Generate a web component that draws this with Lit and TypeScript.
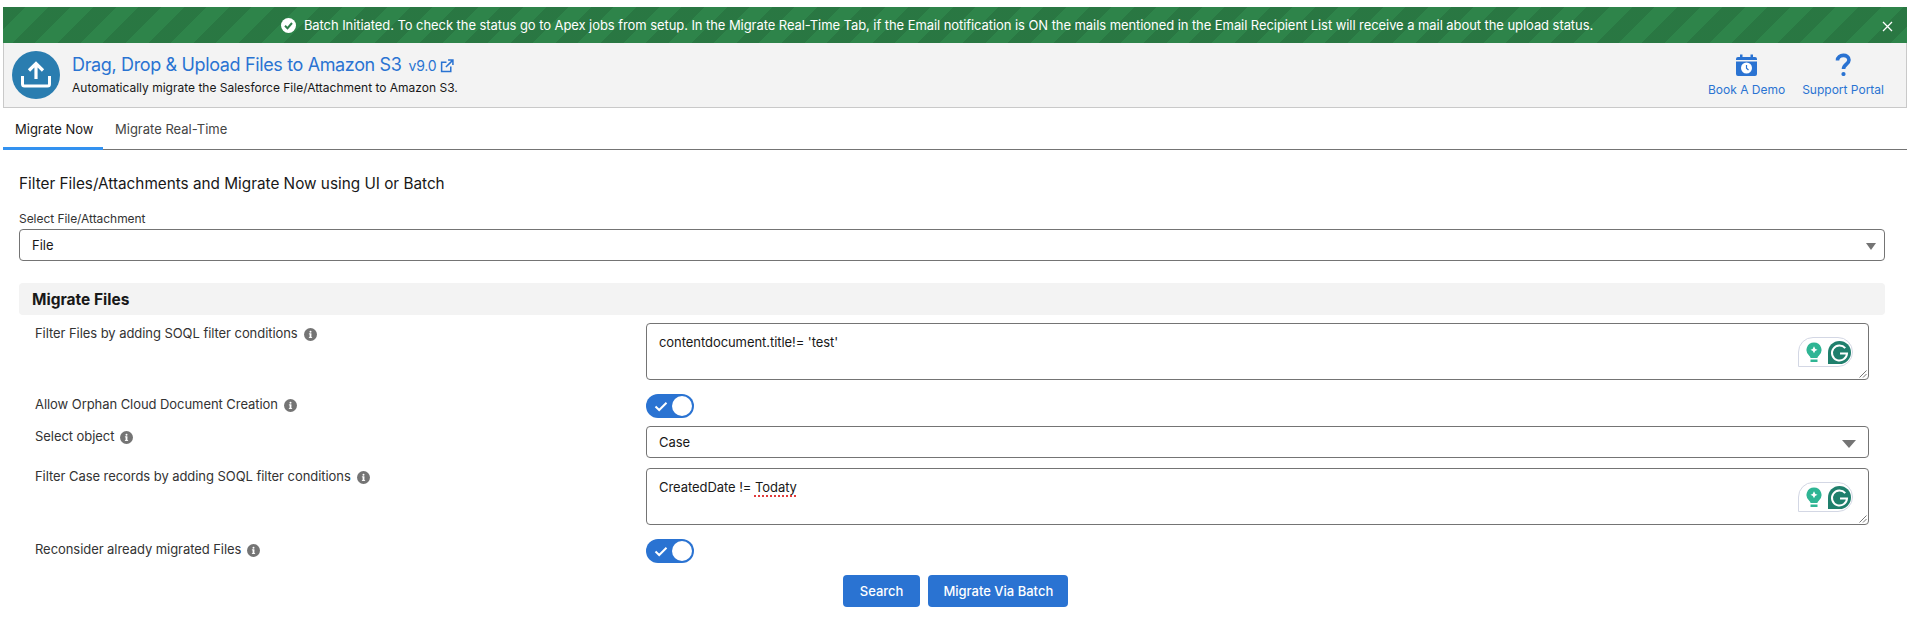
import { LitElement, html, css } from "lit";
import { customElement } from "lit/decorators.js";

const info = html`<svg class="info" viewBox="0 0 13 13"><circle cx="6.5" cy="6.5" r="6.5" fill="#747474"/><rect x="5.6" y="5.6" width="1.8" height="4" fill="#fff"/><rect x="4.9" y="9" width="3.2" height="0.9" fill="#fff"/><rect x="4.9" y="5.4" width="2.4" height="0.9" fill="#fff"/><circle cx="6.5" cy="3.8" r="1" fill="#fff"/></svg>`;

const toggle = html`<div class="toggle"><svg class="tick" viewBox="0 0 14 11"><path d="M1.5 5.5 L5.2 9 L12.5 1.8" fill="none" stroke="#fff" stroke-width="2"/></svg><div class="knob"></div></div>`;

const grammarly = html`<div class="gram">
  <svg width="16" height="21" viewBox="0 0 16 21"><path d="M8 0.5a7.5 7.5 0 0 1 4.6 13.4c-.8.6-1.1 1.2-1.1 2H4.500c0-.8-.3-1.400-1.100-2A7.500 7.500 0 0 1 8 .5z" fill="#2fb594"/><path d="M8 4.200 Q8.500 7 11.500 7.700 Q8.500 8.400 8 11.200 Q7.500 8.400 4.500 7.700 Q7.500 7 8 4.200z" fill="#fff"/><rect x="4.500" y="17.500" width="7" height="2.500" fill="#2fb594"/></svg>
  <svg width="23" height="23" viewBox="0 0 22 22"><path d="M11 0a11 11 0 0 1 0 22H0V11A11 11 0 0 1 11 0z" fill="#1f7f6c"/><path d="M16.500 6.800A7.200 7.200 0 1 0 18.200 12H11.500" fill="none" stroke="#fff" stroke-width="1.900"/></svg>
</div>`;

const grip = html`<svg class="grip" viewBox="0 0 8 8"><path d="M0.500 7.500 L7.500 0.500 M4 7.500 L7.500 4" stroke="#777" stroke-width="1" fill="none"/></svg>`;

@customElement("app-root")
export class AppRoot extends LitElement {
  static styles = css`
    :host { display: block; background: #fff; font-family: Inter, "Liberation Sans", sans-serif; color: #181818; padding-top: 7px; height: 625px; overflow: hidden; }
    * { box-sizing: border-box; }
    .banner { margin-left: 3px; height: 36px; background-color: #2e844a; background-image: repeating-linear-gradient(135deg, rgba(0,0,0,.1) 0, rgba(0,0,0,.1) 16px, transparent 16px, transparent 32px); color: #fff; display: flex; align-items: center; justify-content: center; gap: 8px; font-size: 13px; letter-spacing: -0.07px; padding-right: 36px; position: relative; }
    .banner .ok { width: 15px; height: 15px; flex: none; }
    .close { position: absolute; right: 14px; top: 14px; width: 11px; height: 11px; }
    .header { margin-left: 3px; height: 65px; background: #f3f3f3; border: 1px solid #c9c9c9; border-top: none; display: flex; align-items: center; padding: 0 16px 0 8px; gap: 12px; }
    .logo { width: 48px; height: 48px; flex: none; }
    .titles { flex: 1; }
    .title { display: flex; align-items: baseline; color: #2a73d2; font-size: 18px; letter-spacing: -0.36px; line-height: 24px; }
    .ver { font-size: 14px; margin-left: 7px; letter-spacing: -0.2px; }
    .ext { width: 14px; height: 14px; margin-left: 4px; align-self: center; }
    .sub { font-size: 12px; line-height: 18px; margin-top: 1px; }
    .links { display: flex; gap: 17px; align-items: flex-end; margin-right: 1px; padding-right: 5px; margin-top: 1px; }
    .link { display: flex; flex-direction: column; align-items: center; color: #2a73d2; font-size: 12px; gap: 6px; line-height: 16px; white-space: nowrap; }
    .link svg { height: 23px; width: 23px; }
    .tabs { margin-left: 3px; height: 42px; border-bottom: 1px solid #747474; display: flex; font-size: 13px; white-space: nowrap; }
    .tab { height: 42px; padding: 0 12px; line-height: 42px; width: 100px; }
    .tab.active { border-bottom: 3px solid #3392f0; }
    .tab.other { color: #444; width: auto; }
    .main { padding: 0 22px 0 19px; }
    h1 { margin: 24px 0 0; font-weight: 400; font-size: 15.300px; line-height: 20px; }
    .lab { font-size: 12px; line-height: 16px; margin-top: 17px; color: #333; letter-spacing: -0.05px; }
    .sel { height: 32px; border: 1px solid #747474; border-radius: 4px; display: flex; align-items: center; padding: 0 12px; font-size: 13px; position: relative; background: #fff; }
    .sel.top { margin-top: 2px; }
    .arrow { position: absolute; right: 8px; top: 13px; width: 0; height: 0; border-left: 5.500px solid transparent; border-right: 5.500px solid transparent; border-top: 7px solid #747474; }
    .sel.small .arrow { right: 12px; border-left-width: 7px; border-right-width: 7px; border-top-width: 8px; top: 13px; }
    .sect { margin-top: 22px; height: 32px; background: #f3f3f3; border-radius: 4px; display: flex; align-items: center; padding-left: 13px; font-size: 15.500px; font-weight: 700; }
    .grid { margin-top: 8px; padding-left: 16px; display: grid; grid-template-columns: 611px 1223px; row-gap: 8px; font-size: 13px; letter-spacing: -0.06px; }
    .label { display: flex; gap: 6px; line-height: 20px; align-items: flex-start; color: #333; }
    .info { width: 13px; height: 13px; margin-top: 5px; flex: none; }
    .ta { position: relative; height: 57px; border: 1px solid #747474; border-radius: 4px; padding: 8px 12px; line-height: 20px; }
    .ta.second { margin-top: 2px; }
    .gram { position: absolute; right: 15px; top: 13px; width: 55px; height: 30px; background: #fff; border: 1px solid #d3d7e4; border-radius: 15px 15px 15px 0; display: flex; align-items: center; gap: 6px; padding-left: 7px; }
    .grip { position: absolute; right: 1px; bottom: 1px; width: 8px; height: 8px; }
    .toggle { width: 48px; height: 24px; border-radius: 12px; background: #2a73d2; position: relative; display: flex; align-items: center; }
    .tick { width: 14px; height: 11px; margin-left: 8px; }
    .knob { position: absolute; right: 2px; top: 2px; width: 20px; height: 20px; border-radius: 50%; background: #fff; }
    .gap14 { margin-top: 6px; }
    .squiggle { text-decoration: underline dotted #e23b3b 2px; text-underline-offset: 3px; }
    .btns { margin-top: 12px; display: flex; justify-content: center; gap: 8px; padding-left: 7px; }
    .btn { height: 32px; background: #2a73d2; color: #fff; border-radius: 4px; font-size: 13px; font-weight: 500; display: flex; align-items: center; padding: 0 17px; }
    .btn.wide { padding: 0 15px; }
  `;

  render() {
    return html`
      <div class="banner">
        <svg class="ok" viewBox="0 0 15 15"><circle cx="7.500" cy="7.500" r="7.500" fill="#fff"/><path d="M4 7.800 L6.500 10.200 L11 5" fill="none" stroke="#2e7d4a" stroke-width="2"/></svg>
        <span>Batch Initiated. To check the status go to Apex jobs from setup. In the Migrate Real-Time Tab, if the Email notification is ON the mails mentioned in the Email Recipient List will receive a mail about the upload status.</span>
        <svg class="close" viewBox="0 0 11 11"><path d="M1 1 L10 10 M10 1 L1 10" stroke="#fff" stroke-width="1.300"/></svg>
      </div>
      <div class="header">
        <svg class="logo" viewBox="0 0 48 48"><ellipse cx="24" cy="24" rx="24" ry="24" fill="#2a7db0"/><path d="M24 28 V13 M17 19.500 L24 12.500 L31 19.500" fill="none" stroke="#fff" stroke-width="3.200"/><path d="M10.500 25 V33 Q10.500 35 12.500 35 H35.500 Q37.500 35 37.500 33 V25" fill="none" stroke="#fff" stroke-width="3"/></svg>
        <div class="titles">
          <div class="title"><span>Drag, Drop &amp; Upload Files to Amazon S3</span><span class="ver">v9.0</span>
            <svg class="ext" viewBox="0 0 13 13"><path d="M6 3 H1.500 V11.500 H10 V7 M5.500 7.500 L11.500 1.500 M7.500 1 H12 V5.500" fill="none" stroke="#2a73d2" stroke-width="1.400"/></svg></div>
          <div class="sub">Automatically migrate the Salesforce File/Attachment to Amazon S3.</div>
        </div>
        <div class="links">
          <div class="link"><svg viewBox="0 0 23 23"><path d="M1 6 a2 2 0 0 1 2-2 H5 V1.500 H7.500 V4 H15.500 V1.500 H18 V4 H20 a2 2 0 0 1 2 2 V7 H1z M1 8.500 H22 V21 a2 2 0 0 1-2 2 H3 a2 2 0 0 1-2-2z" fill="#2a73d2"/><circle cx="11.500" cy="15" r="5.500" fill="#fff"/><path d="M11.500 12 V15.200 L13.500 17" fill="none" stroke="#2a73d2" stroke-width="1.200"/></svg>Book A Demo</div>
          <div class="link"><svg viewBox="0 0 23 23"><path d="M5.500 7.500 C5.500 1 17 0.500 17 7 C17 11.500 11.500 11 11.500 16" fill="none" stroke="#2a73d2" stroke-width="3.600"/><circle cx="11.500" cy="21" r="2.100" fill="#2a73d2"/></svg>Support Portal</div>
        </div>
      </div>
      <div class="tabs"><div class="tab active">Migrate Now</div><div class="tab other">Migrate Real-Time</div></div>
      <div class="main">
        <h1>Filter Files/Attachments and Migrate Now using UI or Batch</h1>
        <div class="lab">Select File/Attachment</div>
        <div class="sel top">File<div class="arrow"></div></div>
        <div class="sect">Migrate Files</div>
        <div class="grid">
          <div class="label">Filter Files by adding SOQL filter conditions ${info}</div>
          <div class="ta">contentdocument.title!= 'test'${grammarly}${grip}</div>
          <div class="label gap14">Allow Orphan Cloud Document Creation ${info}</div>
          <div class="gap14">${toggle}</div>
          <div class="label">Select object ${info}</div>
          <div class="sel small">Case<div class="arrow"></div></div>
          <div class="label">Filter Case records by adding SOQL filter conditions ${info}</div>
          <div class="ta second">CreatedDate != <span class="squiggle">Todaty</span>${grammarly}${grip}</div>
          <div class="label gap14">Reconsider already migrated Files ${info}</div>
          <div class="gap14">${toggle}</div>
        </div>
        <div class="btns"><div class="btn">Search</div><div class="btn wide">Migrate Via Batch</div></div>
      </div>
    `;
  }
}
